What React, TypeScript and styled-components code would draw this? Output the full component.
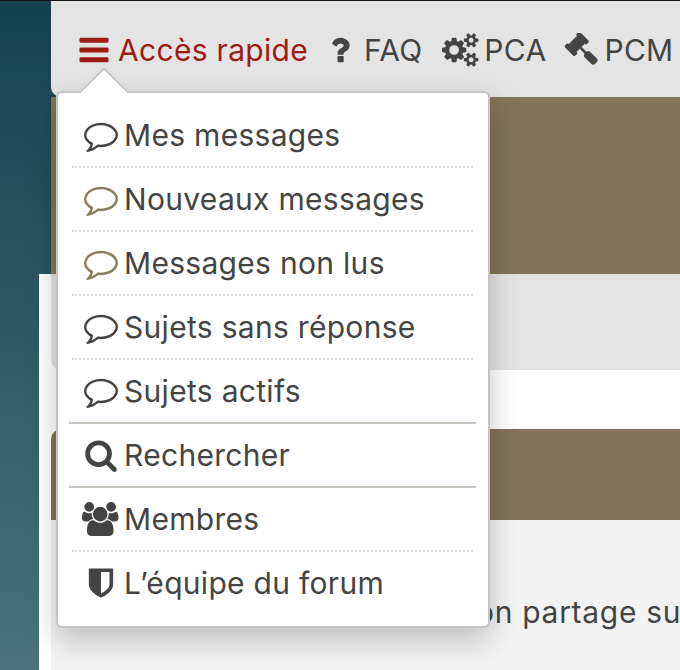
import React from 'react';
import styled, { createGlobalStyle } from 'styled-components';

const GlobalStyle = createGlobalStyle`
  html, body {
    margin: 0;
    padding: 0;
    height: 100%;
    overflow: hidden;
  }
  body {
    background: linear-gradient(to bottom, #17404f 0%, #4c737b 100%);
    font-family: Inter, "Open Sans", sans-serif;
    color: #444;
  }
`;

const FA = {
  bars: 'M1664 1344v128q0 26-19 45t-45 19h-1408q-26 0-45-19t-19-45v-128q0-26 19-45t45-19h1408q26 0 45 19t19 45zm0-512v128q0 26-19 45t-45 19h-1408q-26 0-45-19t-19-45v-128q0-26 19-45t45-19h1408q26 0 45 19t19 45zm0-512v128q0 26-19 45t-45 19h-1408q-26 0-45-19t-19-45v-128q0-26 19-45t45-19h1408q26 0 45 19t19 45z',
  question: 'M1088 1256v240q0 16-12 28t-28 12h-240q-16 0-28-12t-12-28v-240q0-16 12-28t28-12h240q16 0 28 12t12 28zm316-600q0 54-15.5 101t-35 76.5-55 59.5-57.5 43.5-61 35.5q-41 23-68.5 65t-27.5 67q0 17-12 32.5t-28 15.5h-240q-15 0-25.5-18.5t-10.5-37.5v-45q0-83 65-156.5t143-108.5q59-27 84-56t25-76q0-42-46.5-74t-107.5-32q-65 0-108 29-35 25-107 115-13 16-31 16-12 0-25-8l-164-125q-13-10-15.5-25t5.5-28q160-266 464-266 80 0 161 31t146 83 106 127.5 41 158.5z',
  cogs: 'M896 896q0-106-75-181t-181-75-181 75-75 181 75 181 181 75 181-75 75-181zm768 512q0-52-38-90t-90-38-90 38-38 90q0 53 37.5 90.5t90.5 37.5 90.5-37.5 37.5-90.5zm0-1024q0-52-38-90t-90-38-90 38-38 90q0 53 37.5 90.5t90.5 37.5 90.5-37.5 37.5-90.5zm-384 421v185q0 10-7 19.5t-16 10.5l-155 24q-11 35-32 76 34 48 90 115 7 11 7 20 0 12-7 19-23 30-82.5 89.5t-78.5 59.5q-11 0-21-7l-115-90q-37 19-77 31-11 108-23 155-7 24-30 24h-186q-11 0-20-7.5t-10-17.5l-23-153q-34-10-75-31l-118 89q-7 7-20 7-11 0-21-8-144-133-144-160 0-9 7-19 10-14 41-53t47-61q-23-44-35-82l-152-24q-10-1-17-9.5t-7-19.5v-185q0-10 7-19.5t16-10.5l155-24q11-35 32-76-34-48-90-115-7-11-7-20 0-12 7-20 22-30 82-89t79-59q11 0 21 7l115 90q34-18 77-32 11-108 23-154 7-24 30-24h186q11 0 20 7.5t10 17.5l23 153q34 10 75 31l118-89q8-7 20-7 11 0 21 8 144 133 144 160 0 8-7 19-12 16-42 54t-45 60q23 48 34 82l152 23q10 2 17 10.5t7 19.5zm640 533v140q0 16-149 31-12 27-30 52 51 113 51 138 0 4-4 7-122 71-124 71-8 0-46-47t-52-68q-20 2-30 2t-30-2q-14 21-52 68t-46 47q-2 0-124-71-4-3-4-7 0-25 51-138-18-25-30-52-149-15-149-31v-140q0-16 149-31 13-29 30-52-51-113-51-138 0-4 4-7 4-2 35-20t59-34 30-16q8 0 46 46.5t52 67.5q20-2 30-2t30 2q51-71 92-112l6-2q4 0 124 70 4 3 4 7 0 25-51 138 17 23 30 52 149 15 149 31zm0-1024v140q0 16-149 31-12 27-30 52 51 113 51 138 0 4-4 7-122 71-124 71-8 0-46-47t-52-68q-20 2-30 2t-30-2q-14 21-52 68t-46 47q-2 0-124-71-4-3-4-7 0-25 51-138-18-25-30-52-149-15-149-31v-140q0-16 149-31 13-29 30-52-51-113-51-138 0-4 4-7 4-2 35-20t59-34 30-16q8 0 46 46.5t52 67.5q20-2 30-2t30 2q51-71 92-112l6-2q4 0 124 70 4 3 4 7 0 25-51 138 17 23 30 52 149 15 149 31z',
  gavel: 'M1771 1440q0 53-37 90l-107 108q-39 37-91 37-53 0-90-37l-363-364q-38-36-38-90 0-53 43-96l-256-256-126 126q-14 14-34 14t-34-14q2 2 12.5 12t12.5 13 10 11.5 10 13.5 6 13.5 5.5 16.5 1.5 18q0 38-28 68-3 3-16.5 18t-19 20.5-18.5 16.5-22 15.5-22 9-26 4.5q-40 0-68-28l-408-408q-28-28-28-68 0-13 4.5-26t9-22 15.5-22 16.5-18.5 20.5-19 18-16.5q30-28 68-28 10 0 18 1.5t16.5 5.5 13.5 6 13.5 10 11.5 10 13 12.5 12 12.5q-14-14-14-34t14-34l348-348q14-14 34-14t34 14q-2-2-12.5-12t-12.5-13-10-11.5-10-13.5-6-13.5-5.5-16.5-1.5-18q0-38 28-68 3-3 16.5-18t19-20.5 18.5-16.5 22-15.5 22-9 26-4.5q40 0 68 28l408 408q28 28 28 68 0 13-4.5 26t-9 22-15.5 22-16.5 18.5-20.5 19-18 16.5q-30 28-68 28-10 0-18-1.5t-16.5-5.5-13.5-6-13.5-10-11.5-10-13-12.5-12-12.5q14 14 14 34t-14 34l-126 126 256 256q43-43 96-43 52 0 91 37l363 363q37 39 37 91z',
  comment: 'M896 384q-204 0-381.5 69.5t-282 187.5-104.5 253q0 112 71.5 213.5t201.5 175.5l87 50-27 96q-24 91-70 172 152-63 275-171l43-38 57 6q69 8 130 8 204 0 381.5-69.5t282-187.5 104.5-253-104.5-253-282-187.5-381.5-69.5zm896 512q0 174-120 321.5t-326 233-450 85.5q-70 0-145-8-198 175-460 242-49 14-114 22h-5q-15 0-27-10.5t-16-27.5v-1q-3-4-.5-12t2-10 4.5-9.5l6-9 7-8.5 8-9q7-8 31-34.5t34.5-38 31-39.5 32.5-51 27-59 26-76q-157-89-247.5-220t-90.5-281q0-174 120-321.5t326-233 450-85.5 450 85.5 326 233 120 321.5z',
  search: 'M1216 832q0-185-131.5-316.5t-316.5-131.5-316.5 131.5-131.5 316.5 131.5 316.5 316.5 131.5 316.5-131.5 131.5-316.5zm512 832q0 52-38 90t-90 38q-54 0-90-38l-343-342q-179 124-399 124-143 0-273.5-55.5t-225-150-150-225-55.5-273.5 55.5-273.5 150-225 225-150 273.5-55.5 273.5 55.5 225 150 150 225 55.5 273.5q0 220-124 399l343 343q37 37 37 90z',
  users: 'M593 896q-162 5-265 128h-134q-82 0-138-40.5t-56-118.5q0-353 124-353 6 0 43.5 21t97.5 42.5 119 21.5q67 0 133-23-5 37-5 66 0 139 81 256zm1071 637q0 120-73 189.5t-194 69.5h-874q-121 0-194-69.5t-73-189.5q0-53 3.5-103.5t14-109 26.5-108.5 43-97.5 62-81 85.5-53.5 111.5-20q10 0 43 21.5t73 48 107 48 135 21.5 135-21.5 107-48 73-48 43-21.5q61 0 111.5 20t85.5 53.5 62 81 43 97.5 26.5 108.5 14 109 3.5 103.5zm-1024-1277q0 106-75 181t-181 75-181-75-75-181 75-181 181-75 181 75 75 181zm704 384q0 159-112.5 271.5t-271.5 112.5-271.5-112.5-112.5-271.5 112.5-271.5 271.5-112.5 271.5 112.5 112.5 271.5zm576 225q0 78-56 118.5t-138 40.5h-134q-103-123-265-128 81-117 81-256 0-29-5-66 66 23 133 23 59 0 119-21.5t97.5-42.5 43.5-21q124 0 124 353zm-128-609q0 106-75 181t-181 75-181-75-75-181 75-181 181-75 181 75 75 181z',
  shield: 'M1344 960v-640h-448v1137q119-63 213-137 235-184 235-360zm192-768v768q0 86-33.5 170.5t-83 150-118 127.5-126.5 103-121 77.5-89.5 49.5-42.5 20q-12 6-26 6t-26-6q-16-7-42.5-20t-89.5-49.5-121-77.5-126.5-103-118-127.5-83-150-33.5-170.5v-768q0-26 19-45t45-19h1152q26 0 45 19t19 45z',
};

type IconName = keyof typeof FA;

const IconSvg = styled.svg<{ $color?: string }>`
  display: block;
  flex: none;
  height: 34px;
  width: auto;
  fill: ${(p) => p.$color || '#444'};
`;

const Icon = ({ name, color, wide }: { name: IconName; color?: string; wide?: boolean }) => (
  <IconSvg viewBox={wide ? '0 0 2048 1792' : '0 0 1792 1792'} $color={color}>
    <path d={FA[name]} />
  </IconSvg>
);

const Page = styled.div`
  position: relative;
  height: 670px;
  box-sizing: border-box;
  border-top: 1px solid #111;
  padding-left: 39px;
  overflow: hidden;
`;

const Wrap = styled.div`
  display: flex;
  flex-direction: column;
  height: 100%;
`;

const Top = styled.div`
  height: 273px;
  padding-left: 12px;
  display: flex;
  flex-direction: column;
`;

const Navbar = styled.div`
  height: 96px;
  background: #e4e4e4;
  border-bottom-left-radius: 10px;
  display: flex;
  align-items: flex-start;
  padding: 32px 0 0 26px;
  box-sizing: border-box;
  white-space: nowrap;
`;

const NavItem = styled.a<{ $active?: boolean; $gap: number; $after: number }>`
  display: flex;
  align-items: center;
  height: 34px;
  gap: ${(p) => p.$gap}px;
  margin-right: ${(p) => p.$after}px;
  font-size: 30px;
  letter-spacing: 0.3px;
  color: ${(p) => (p.$active ? '#9d1c12' : '#444')};
`;

const Banner = styled.div`
  flex: 1;
  background: #807558;
`;

const Content = styled.div`
  flex: 1;
  background: #fff;
  padding-left: 12px;
  display: flex;
  flex-direction: column;
`;

const SubBar = styled.div`
  height: 96px;
  background: #e4e4e4;
  border-bottom-left-radius: 10px;
`;

const Spacer = styled.div`
  height: 59px;
`;

const SectionHead = styled.div`
  height: 91px;
  background: #807558;
  border-top-left-radius: 10px;
`;

const SectionBody = styled.div`
  flex: 1;
  background: #f3f3f3;
  padding: 73px 0 0 425px;
  white-space: nowrap;
  font-size: 30px;
  letter-spacing: 0.7px;
  line-height: 38px;
  color: #444;
  overflow: hidden;
`;

const Dropdown = styled.div`
  position: absolute;
  left: 56px;
  top: 90px;
  width: 434px;
  height: 537px;
  box-sizing: border-box;
  background: #fff;
  border: 2px solid #c7c3be;
  border-radius: 6px;
  padding: 11px 12px 0 11px;
  box-shadow: 0 12px 30px rgba(0, 0, 0, 0.22);
`;

const Pointer = styled.div`
  position: absolute;
  left: 22px;
  top: -27px;
  width: 48px;
  height: 27px;
  overflow: hidden;

  &::before {
    content: '';
    position: absolute;
    left: 7px;
    top: 8px;
    width: 34px;
    height: 34px;
    box-sizing: border-box;
    background: #fff;
    border: 2px solid #c7c3be;
    transform: rotate(45deg);
  }

  &::after {
    content: '';
    position: absolute;
    left: 2px;
    right: 2px;
    bottom: 0;
    height: 2px;
    background: #fff;
  }
`;

const Row = styled.div<{ $sep?: 'dotted' | 'solid' | 'none' }>`
  display: flex;
  align-items: center;
  height: 64px;
  box-sizing: border-box;
  gap: 3px;
  padding: 0 0 2px 12px;
  font-size: 30px;
  letter-spacing: 0.3px;
  color: #444;
  position: relative;

  &::after {
    content: '';
    position: absolute;
    bottom: 0;
    left: ${(p) => (p.$sep === 'solid' ? 0 : '3px')};
    right: ${(p) => (p.$sep === 'solid' ? 0 : '3px')};
    ${(p) =>
      p.$sep === 'solid'
        ? 'border-bottom: 2px solid #c7c3be;'
        : p.$sep === 'dotted'
        ? 'border-bottom: 2px dotted #dedcd9;'
        : ''}
  }
`;

const RowIcon = styled.span`
  width: 40px;
  display: flex;
  justify-content: center;
  flex: none;
`;

const items: { icon: IconName; label: string; color?: string; sep: 'dotted' | 'solid' | 'none'; wide?: boolean }[] = [
  { icon: 'comment', label: 'Mes messages', sep: 'dotted' },
  { icon: 'comment', label: 'Nouveaux messages', color: '#8a7c5a', sep: 'dotted' },
  { icon: 'comment', label: 'Messages non lus', color: '#8a7c5a', sep: 'dotted' },
  { icon: 'comment', label: 'Sujets sans réponse', sep: 'dotted' },
  { icon: 'comment', label: 'Sujets actifs', sep: 'solid' },
  { icon: 'search', label: 'Rechercher', sep: 'solid' },
  { icon: 'users', label: 'Membres', sep: 'dotted', wide: true },
  { icon: 'shield', label: 'L’équipe du forum', sep: 'none' },
];

export default function App() {
  return (
    <>
      <GlobalStyle />
      <Page>
        <Wrap>
          <Top>
            <Navbar>
              <NavItem $active $gap={7} $after={15}>
                <Icon name="bars" color="#9d1c12" />
                Accès rapide
              </NavItem>
              <NavItem $gap={7} $after={20}>
                <Icon name="question" />
                FAQ
              </NavItem>
              <NavItem $gap={3} $after={18}>
                <Icon name="cogs" wide />
                PCA
              </NavItem>
              <NavItem $gap={6} $after={0}>
                <Icon name="gavel" />
                PCM
              </NavItem>
            </Navbar>
            <Banner />
          </Top>
          <Content>
            <SubBar />
            <Spacer />
            <SectionHead />
            <SectionBody>on partage su</SectionBody>
          </Content>
        </Wrap>
        <Dropdown>
          <Pointer />
          {items.map((item) => (
            <Row key={item.label} $sep={item.sep}>
              <RowIcon>
                <Icon name={item.icon} color={item.color} wide={item.wide} />
              </RowIcon>
              {item.label}
            </Row>
          ))}
        </Dropdown>
      </Page>
    </>
  );
}
